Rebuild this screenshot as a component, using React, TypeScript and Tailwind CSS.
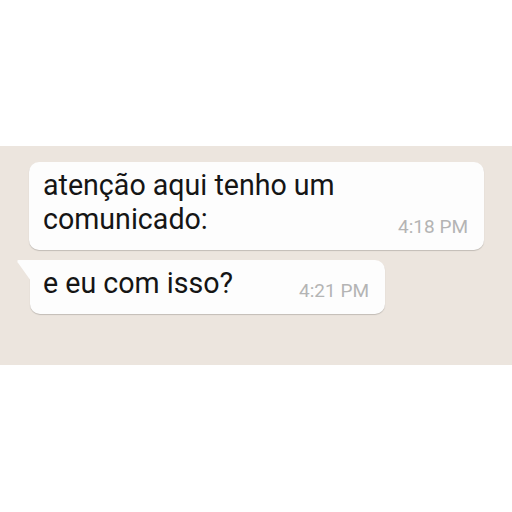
export default function App() {
  return (
    <div className="w-[512px] h-[512px] bg-white font-['Roboto',sans-serif] flex flex-col">
      <div className="h-[146px] shrink-0" />
      <div className="h-[219px] shrink-0 bg-[#ece5de] pt-[16px] flex flex-col gap-[10px]">
        {/* primeira mensagem */}
        <div className="ml-[29px] w-[455px] rounded-[10px] bg-[#fdfdfd] shadow-[0_1px_1px_rgba(0,0,0,0.18)] pl-[14px] pr-[16px] pt-[6px] pb-[14px] flex items-end justify-between">
          <p className="text-[28.6px] leading-[34px] text-[#151515] max-w-[310px]">
            atenção aqui tenho um comunicado:
          </p>
          <span className="text-[19px] leading-[19px] text-[#b4b4b4] shrink-0">4:18 PM</span>
        </div>

        {/* resposta */}
        <div className="relative ml-[30px] w-[355px] rounded-[10px] rounded-tl-none bg-[#fdfdfd] shadow-[0_1px_1px_rgba(0,0,0,0.18)] pl-[13px] pr-[16px] pt-[6px] pb-[14px] flex items-end justify-between">
          <svg className="absolute left-[-13px] top-0" width="14" height="21" viewBox="0 0 14 21">
            <path d="M1.5 0 H14 V21 L0.6 2.2 Q-0.2 0 1.5 0 Z" fill="#fdfdfd" />
          </svg>
          <p className="text-[28.6px] leading-[34px] text-[#151515]">e eu com isso?</p>
          <span className="text-[19px] leading-[19px] text-[#b4b4b4] shrink-0">4:21 PM</span>
        </div>
      </div>
      <div className="flex-1" />
    </div>
  );
}
